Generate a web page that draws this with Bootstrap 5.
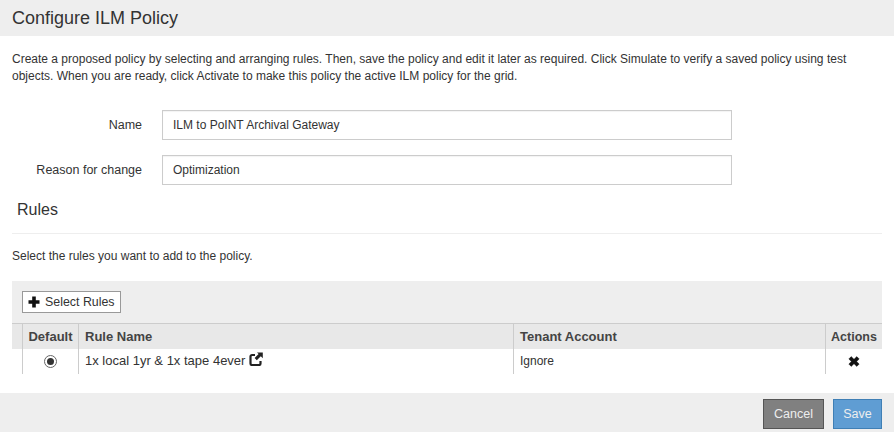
<!DOCTYPE html>
<html lang="en">
  <head>
    <meta charset="UTF-8" />
    <title>Configure ILM Policy</title>
    <link href="https://cdn.jsdelivr.net/npm/bootstrap@5.3.0/dist/css/bootstrap.min.css" rel="stylesheet" />
    <style>
      body { font-family: "Liberation Sans", Arial, sans-serif; font-size: 12px; color: #333; background: #fff; height: 432px; overflow: hidden; }
      .page-head { background: #eee; height: 36px; padding: 0 12px; }
      .page-head h1 { font-size: 18px; line-height: 36px; margin: 0; color: #333; font-weight: 400; }
      .intro { padding: 15px 12px 0; line-height: 17px; height: 74px; margin: 0; }
      .form-row { display: flex; align-items: center; height: 30px; margin-bottom: 15px; }
      .form-row label { width: 142px; text-align: right; margin: 0; font-size: 12.5px; }
      .form-row .form-control { width: 570px; height: 30px; margin-left: 20px; font-size: 12px; color: #333; padding: 0 10px; border: 1px solid #ccc; border-radius: 0; box-shadow: inset 0 1px 1px rgba(0,0,0,.05); }
      .rules-title { font-size: 16px; font-weight: 400; line-height: 20px; margin: 0; padding: 0 17px; height: 33px; color: #333; }
      .rules-rule { margin: 0 12px; border-top: 1px solid #eee; opacity: 1; }
      .rules-help { margin: 0; padding: 14px 12px 0; height: 47px; line-height: 17px; }
      .rules-box { margin: 0 12px; }
      .rules-toolbar { background: #eee; height: 42px; padding: 10px; }
      .btn-select { display: flex; align-items: center; height: 22px; width: 99px; padding: 0 0 0 5px; font-size: 12.4px; color: #333; background: #fff; border: 1px solid #999; border-radius: 0; }
      .btn-select svg { margin-right: 5px; }
      .rules-table { table-layout: fixed; width: 870px; margin: 0; border-collapse: separate; border-spacing: 0; font-size: 13px; }
      .rules-table th, .rules-table td { padding: 0 6px; border: 0; border-left: 1px solid #ccc; color: #333; background: transparent; box-shadow: none; }
      .rules-table th { background: #e8e8e8; height: 26px; font-weight: 700; font-size: 13px; border-top: 1px solid #ccc; vertical-align: middle; color: #444; padding-top: 1px; }
      .rules-table td { height: 25px; vertical-align: middle; padding-bottom: 1px; }
      .rules-table th.spacer { width: 10px; padding: 0; border-left: 0; background: #e8e8e8; }
      .rules-table td.spacer { width: 10px; padding: 0; border-left: 0; background: #fff; }
      .rules-table th.col-actions { font-size: 12.5px; }
      .rules-table td.col-tenant { font-size: 12px; }
      .radio-on { display: inline-block; width: 13px; height: 13px; border: 1px solid #666; border-radius: 50%; padding: 2px; background: #fff; vertical-align: middle; }
      .radio-on i { display: block; width: 7px; height: 7px; border-radius: 50%; background: #333; }
      .page-foot { position: absolute; left: 0; right: 0; top: 393px; height: 39px; background: #eee; padding: 6px 12px 0; display: flex; justify-content: flex-end; gap: 9px; }
      .page-foot .btn { height: 30px; font-size: 12.5px; padding: 0; border-radius: 0; color: #eee; }
      .btn-cancel { width: 61px; background: #808080; border: 1px solid #555; }
      .btn-save { width: 49px; background: #5f9dd3; border: 1px solid #3f7fb5; }
    </style>
  </head>
  <body>
    <div class="page-head"><h1>Configure ILM Policy</h1></div>
    <p class="intro">Create a proposed policy by selecting and arranging rules. Then, save the policy and edit it later as required. Click Simulate to verify a saved policy using test objects. When you are ready, click Activate to make this policy the active ILM policy for the grid.</p>

    <form>
      <div class="form-row">
        <label for="name">Name</label>
        <input type="text" class="form-control" id="name" value="ILM to PoINT Archival Gateway" />
      </div>
      <div class="form-row">
        <label for="reason">Reason for change</label>
        <input type="text" class="form-control" id="reason" value="Optimization" />
      </div>
    </form>

    <h2 class="rules-title">Rules</h2>
    <hr class="rules-rule" />
    <p class="rules-help">Select the rules you want to add to the policy.</p>

    <div class="rules-box">
      <div class="rules-toolbar">
        <button type="button" class="btn btn-select">
          <svg width="12" height="12" viewBox="0 0 12 12"><path d="M4.2 0.5h3.6v3.7h3.7v3.6h-3.7v3.7h-3.6v-3.7h-3.7v-3.6h3.7z" fill="#111" /></svg>
          Select Rules
        </button>
      </div>
      <table class="table rules-table">
        <colgroup>
          <col style="width: 10px" />
          <col style="width: 56px" />
          <col style="width: 435px" />
          <col style="width: 312px" />
          <col style="width: 57px" />
        </colgroup>
        <thead>
          <tr>
            <th class="spacer"></th>
            <th class="text-center px-0">Default</th>
            <th>Rule Name</th>
            <th>Tenant Account</th>
            <th class="text-center px-0 col-actions">Actions</th>
          </tr>
        </thead>
        <tbody>
          <tr>
            <td class="spacer"></td>
            <td class="text-center px-0"><span class="radio-on"><i></i></span></td>
            <td>1x local 1yr &amp; 1x tape 4ever
              <svg width="14" height="14" viewBox="0 0 14 14" style="vertical-align: -1px"><path d="M6 3H3a1.5 1.5 0 0 0-1.5 1.5v7A1.5 1.5 0 0 0 3 13h7a1.5 1.5 0 0 0 1.5-1.5V9" fill="none" stroke="#222" stroke-width="2.2" /><path d="M8 0.5h5.8v5.8l-2-2-4 4-2.2-2.2 4-4z" fill="#222" /></svg>
            </td>
            <td class="col-tenant">Ignore</td>
            <td class="text-center px-0">
              <svg width="12" height="11" viewBox="0 0 12 11"><path d="M0.8 3l2.4-2.4L6 3.2 8.8 0.6 11.2 3 8.6 5.5l2.6 2.5-2.4 2.4L6 7.8 3.2 10.4 0.8 8l2.6-2.5z" fill="#111" stroke="#111" stroke-width=".4" /></svg>
            </td>
          </tr>
        </tbody>
      </table>
    </div>

    <div class="page-foot">
      <button type="button" class="btn btn-cancel">Cancel</button>
      <button type="button" class="btn btn-save">Save</button>
    </div>

    <script src="https://cdn.jsdelivr.net/npm/bootstrap@5.3.0/dist/js/bootstrap.bundle.min.js"></script>
  </body>
</html>
